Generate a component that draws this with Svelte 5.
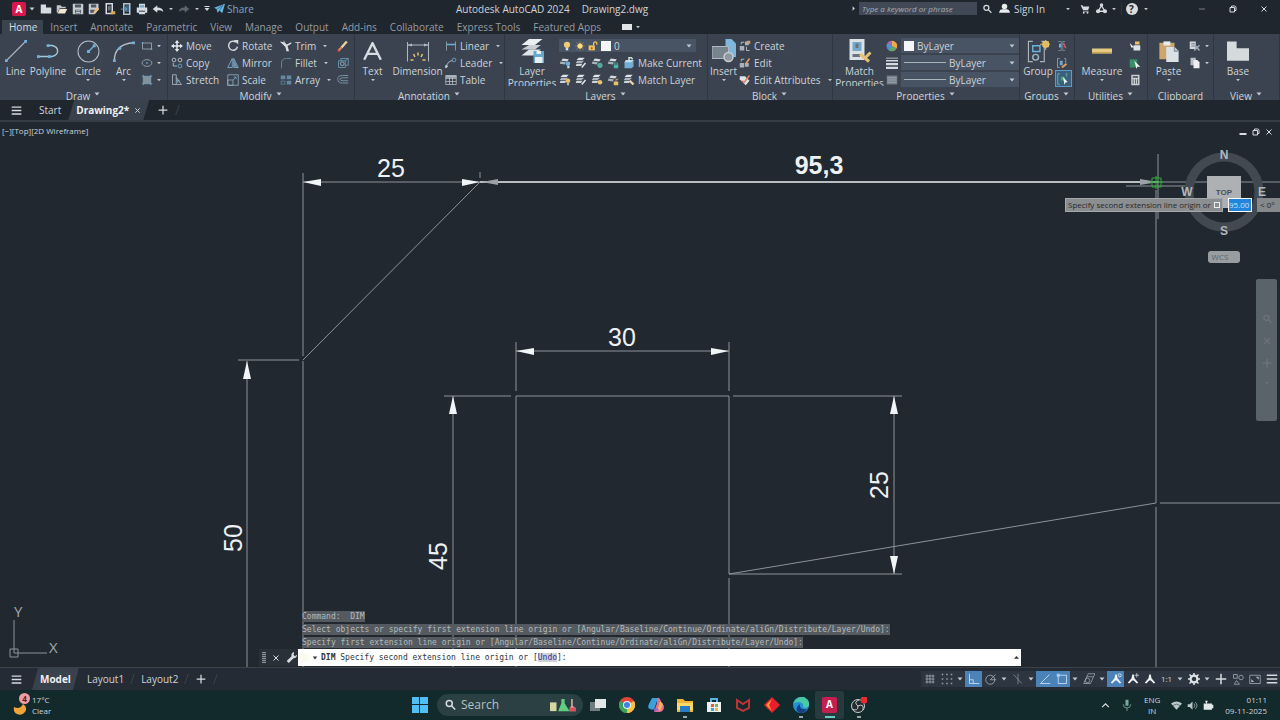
<script>
  const C = "#d5dbe0";
  const B = "#6fb1dc";
  const Y = "#e8c36a";

  const line = (d, color = C, w = 1) =>
    `<path d="${d}" fill="none" stroke="${color}" stroke-width="${w}"/>`;
  const fill = (d, color = C) => `<path d="${d}" fill="${color}"/>`;
  const sheets =
    fill("M5 2l8 1-2 3-8-1z") + fill("M2 6l7 1-1 3-7-1z", "#a9b2ba");
  const stack =
    fill("M5 1h8l-3 3H2z", "#dfe3e7") + fill("M3 5h9l-3 3H1z", "#aeb6bd") + fill("M2 9h8l-2 3H1z", "#cfd5d9");
  const person = fill("M7 2h2l1 5 5 6-2 1-4-4h-2l-4 4-2-1 5-6z", "#eef2f5");

  // every icon is drawn on a 16 x 16 grid
  const icons = {
    caret: fill("M3 5h10l-5 6z", "#c3c9cf"),
    right: fill("M6 3l5 5-5 5z"),
    burger: fill("M1 2h14v2H1zM1 7h14v2H1zM1 12h14v2H1z"),
    plus: line("M8 1v14M1 8h14", C, 2),
    close: line("M3 3l10 10M13 3L3 13", C, 2),
    minimize: line("M2 8h12", C, 1),
    bar: line("M1 12h14", C, 4),
    restore: line("M2 5h9v9H2zM5 5V2h6q3 0 3 3v6h-3", C, 2),
    new: fill("M1 2h7v4h7v8H1z"),
    open: fill("M1 3h5l2 2h5v2H5l-3 6H1z", "#bfc4c8") + fill("M5 8h10l-3 6H2z", "#f2e7cf"),
    save: fill("M1 1h13l1 1v13H1z", "#c6cbd0") + fill("M4 2h8v4H4zM4 9h8v5H4z", "#4d5964") + fill("M5 10h6v1H5zM5 12h6v1H5z", "#e3e6e8"),
    saveas: fill("M1 1h13v8l-5 6H1z", "#c6cbd0") + fill("M4 2h7v4H4zM3 9h6v4H3z", "#4d5964") + line("M8 13l6-6", "#eebc72", 3),
    web: line("M3 1h8v13H3z", C, 2) + fill("M5 4h4v6H5z", "#65717c") + fill("M9 11h6v4H9z", "#d5ad55"),
    mobile: line("M5 1h8v14H5z", "#b9c2ca", 2) + fill("M7 3h5v9H7z", "#3d6a8b") + line("M1 8h8M6 5l3 3-3 3", B, 1),
    print: fill("M4 1h8v5h3v7h-3v2H4v-2H1V6h3z", "#d7dce1") + fill("M4 10h8v2H4z", "#66717b") + fill("M5 3h6v3H5z", "#6fa7cb"),
    undo: fill("M1 8l6-5v3q8 0 8 6-2-3-8-2v3z"),
    redo: fill("M15 8L9 3v3q-8 0-8 6 2-3 8-2v3z", "#5c6670"),
    more: fill("M3 2h10v2H3zM3 6h10l-5 6z"),
    plane: fill("M0 7L16 1l-4 14-4-4-3 3-1-5z", "#64b5e8") + line("M4 9l9-6-5 8", "#286080", 1),
    search: `<circle cx="7" cy="6" r="4" fill="none" stroke="${C}" stroke-width="2"/>` + line("M10 9l5 5", C, 2),
    user: `<circle cx="8" cy="5" r="4" fill="#e9edf0"/>` + fill("M0 14q1-5 5-5h6q4 0 5 5z", "#e9edf0"),
    cart: fill("M1 2h3l1 2h10l-2 6H5zM5 11h9v1H5z") + `<circle cx="6" cy="14" r="1.5" fill="${C}"/><circle cx="12" cy="14" r="1.5" fill="${C}"/>`,
    nodes: line("M8 4l-5 8h10z", C, 2) + `<circle cx="8" cy="3" r="2.5" fill="${C}"/><circle cx="3" cy="12" r="3" fill="${C}"/><circle cx="13" cy="12" r="3" fill="${C}"/>`,
    line: line("M1 15L15 1", "#aeb7bf") + fill("M0 14h2v2H0zM14 0h2v2h-2z", B),
    polyline: line("M0 12h11q4-1 4-4t-4-4H8", "#a8c5d8") + fill("M0 11h2v2H0zM8 11h2v2H8zM7 3h2v2H7z", B),
    circle: `<circle cx="8" cy="8" r="7.3" fill="none" stroke="#b4bdc5" stroke-width=".7"/>` + line("M8 8l4-4", B) + fill("M7 7h2v2H7zM11 3h2v2h-2z", B),
    arc: line("M1 15Q1 3 15 2", "#b4bdc5") + fill("M0 14h2v2H0zM4 5h2v2H4zM14 1h2v2h-2z", B),
    rect: line("M2 4h12v8H2z", "#aab4bd") + fill("M1 3h2v2H1zM13 11h2v2h-2z", B),
    ellipse: `<ellipse cx="8" cy="8" rx="6.5" ry="4.5" fill="none" stroke="#aab4bd"/><path d="M7 7h2v2H7z" fill="${B}"/>`,
    hatch: fill("M3 3h10v10H3z", "#83919d") + line("M1 3h14M1 13h14M3 1v14M13 1v14", "#7ba6c2"),
    move: line("M8 2v12M2 8h12", "#e6eaed", 2) + fill("M8 0l3 4H5zM8 16l3-4H5zM0 8l4-3v6zM16 8l-4-3v6z", "#e6eaed"),
    copy: `<circle cx="4" cy="4" r="2.5" fill="none" stroke="${C}"/><circle cx="12" cy="4" r="2.5" fill="none" stroke="${C}"/><circle cx="12" cy="12" r="2.5" fill="none" stroke="${B}"/>` + line("M3 8v4h5", C),
    stretch: line("M2 1h5v13H2zM7 5l7 9H7", "#bac3ca") + line("M9 6v6M7 9h5", B),
    rotate: line("M12 3A6 6 0 1 0 14 9", "#ced4d9", 2) + fill("M9 0h6v6z"),
    mirror: line("M7 2v12H1zM9 2v12h6z", "#8fbfdf", 1) + fill("M9 4v9h5z", "#6c94b0"),
    scale: line("M1 1h14v14H1zM1 8h7v7H1z", "#9cb5c6") + line("M8 8l4-4M9 4h3v3", B),
    trim: fill("M0 2l5 1 4 3 6-3v2l-5 3 2 7h-3L7 9z", "#dfe3e6") + line("M1 3l7 4M5 1l3 6M9 7v8", C),
    fillet: line("M2 15V8q0-6 7-6h6", "#7995a8", 1),
    array: fill("M1 2h6v5H1zM9 2h6v5H9zM1 9h6v5H1zM9 9h6v5H9z", "#6787a0") + fill("M2 10h4v3H2z", "#314657"),
    erase: line("M2 14l4-4", "#e8865e", 3) + line("M6 10l7-8", "#f0d3a2", 3) + fill("M1 12l3 3-3 1z", "#e54e43"),
    explode: line("M2 5h9v9H2zM5 5V2h10v9h-4M11 5l4-3", "#70a5c7", 1) + `<circle cx="7" cy="9" r="2.5" fill="none" stroke="#bac9d4"/>`,
    offset: line("M15 2H7Q1 2 1 7t6 5h8M15 5H8Q4 5 4 7t4 2h7", "#8ba8ba", 1),
    text: line("M1 15L8 1l7 14M4 10h8", "#d5dce2", 2),
    dimension: line("M1 2v13M15 2v13M1 4h14", "#aeb7bf", 0.7) + fill("M1 4l3-1v2zM15 4l-3-1v2z", "#aeb7bf") + line("M8 9v2M5 10l1 2M11 10l-1 2M3 14h2M13 14h-2", Y),
    linear: line("M2 2v12M14 2v12", "#a3adb6") + line("M2 6h12", B, 2),
    leader: line("M2 14q1-9 8-9", C) + `<circle cx="12" cy="4" r="2.5" fill="none" stroke="${B}"/><path d="M0 15l1-5 3 3z" fill="${C}"/>`,
    table: line("M1 2h14v12H1zM1 6h14M1 10h14M6 2v12M10 2v12", "#bac2ca") + fill("M1 2h14v3H1z", "#aeb7bf"),
    layers: fill("M6 0h9l-5 4H1z", "#eceff1") + fill("M6 4h8l-4 3H1z", "#c7cdd2") + fill("M6 7h8l-5 4H1z", "#e0e4e7") + fill("M9 8h7v8H9z", "#62a9d2") + fill("M11 8h3v2h-3zM10 12h5v4h-5z", "#e9eff2"),
    bulb: `<circle cx="8" cy="6" r="5" fill="#f2ca76"/>` + fill("M6 11h4v4H6z", "#d9dde0"),
    sun: `<circle cx="8" cy="8" r="4" fill="#f4d36b"/>` + line("M8 0v16M0 8h16M2 2l12 12M14 2L2 14", "#aa9040", 1) + `<circle cx="8" cy="8" r="4" fill="#f7dc83"/>`,
    unlock: fill("M1 7h10v8H1z", "#efbf5d") + line("M9 7V3q3-3 5 0v3", "#efbf5d", 2) + fill("M5 10h2v3H5z", "#785920"),
    layoff: sheets + `<circle cx="12" cy="9" r="3" fill="${B}"/>` + fill("M11 12h3v3h-3z", C),
    layiso: stack + line("M9 14l5-6", "#e2e6e9", 2),
    layfreeze: sheets + `<circle cx="12" cy="11" r="3.5" fill="#4faaa0"/>`,
    laylock: sheets + fill("M9 10h6v5H9z", "#4bb4a8") + line("M10 10V8h4v2", "#4bb4a8", 1),
    laycur: fill("M4 4h10v9l-3 2H2V7z", "#74aed3") + fill("M4 4h10l-3 3H2z", "#c3deef") + line("M8 5V1h3l2 2", C, 2),
    layon: stack + `<circle cx="12" cy="9" r="3" fill="${Y}"/>` + fill("M11 12h2v3h-2z", C),
    laythaw: stack + `<circle cx="12" cy="11" r="3" fill="${Y}"/>`,
    layunlock: sheets + fill("M9 10h6v5H9z", Y) + line("M12 10V7h3", Y, 1),
    laymatch: stack + line("M9 9l5 5", "#eed9a9", 3),
    insert: fill("M9 0h4l3 3v9H9z", "#7db7dc") + fill("M0 5h11v8H0z", "#77838d") + line("M0 5h11v8H0z", "#aeb8c0", 0.7) + `<circle cx="11" cy="12" r="3" fill="#8d98a0" stroke="#c8ced2"/>`,
    create: fill("M1 8h6v6H1zM8 2h5v5H8z", "#a9b2ba") + line("M3 6V3h4M10 9v5h4", C) + fill("M11 1h4v4h-4z", "#e49b60"),
    edit: fill("M1 8h6v6H1zM8 8h5v5H8z", "#a9b2ba") + line("M3 6V3h4", C) + line("M9 9l5-7", "#eba06d", 2),
    attr: fill("M1 3h7l6 6-5 6-8-8z", "#dde2e6") + line("M4 9l3 2 7-9", "#df805c", 2),
    match: fill("M1 0h10v14H1z", "#dce1e4") + fill("M3 2h6v6H3z", "#70a9cf") + fill("M5 3h2v3H5zM3 10h5v2H3z", "#68737c") + line("M8 10l6 5M11 13l4-4", "#e5c272", 2),
    wheel: `<circle cx="8" cy="8" r="7" fill="#e65a52"/>` + fill("M8 8V1a7 7 0 0 1 6 10z", "#edac47") + fill("M8 8l6 3a7 7 0 0 1-10 3z", "#54ae6a") + fill("M8 8l-4 6a7 7 0 0 1-2-10z", "#4e8fd9") + fill("M8 8L2 4a7 7 0 0 1 6-3z", "#9c6bc5"),
    weight: fill("M0 1h16v1H0zM0 4h16v2H0zM0 8h16v3H0zM0 13h16v3H0z"),
    linetype: fill("M1 2h14v12H1z", "#737e88") + line("M2 5h12M2 8h12M2 11h12", "#aeb6bd"),
    group: line("M4 1H1v14h3M10 1h2v14h-3", "#a9b3bb", 0.8) + line("M4 4h5v4H4z", B) + `<circle cx="6" cy="12" r="2" fill="none" stroke="#9bb4c4"/><circle cx="13" cy="3" r="2.5" fill="#f0cc70"/>` + line("M13 0v7M9 3h7M11 1l4 4M15 1l-4 4", "#dcb95f", .7),
    ungroup: line("M3 2h4v12H3M12 2H9v12h3", "#8498a7") + fill("M4 5h3v5H4z", B) + line("M10 4l3 7", "#d65e62", 2),
    groupedit: line("M5 2H2v12h3M11 2h2v6", "#9db2c0") + fill("M5 5h4v6H5z", "#72a6c8") + line("M8 14l6-5", "#dc9862", 3),
    groupsel: line("M4 1H1v14h3M11 1h2v4", "#7fbd95") + fill("M5 5h5v5H5z", "#4ea27b") + fill("M8 5l6 7-3 1-1 3z", "#eff4f5"),
    measure: fill("M0 6h16v4H0z", "#e6ca83") + fill("M0 9h16v1H0z", "#b5984c"),
    selectall: fill("M6 7h9v7H6z", "#dde2e6") + fill("M8 2h6v4H8z", Y) + fill("M1 4l6 6H3z", "#eef1f3"),
    quick: fill("M1 3h10v11H1z", "#398e65") + fill("M7 5l8 8h-4l-1 3z", "#edf2f2"),
    calc: fill("M3 1h11v14H3z", "#c8cdd1") + fill("M5 3h7v2H5zM5 7h1v6H5zM8 7h1v6H8zM11 7h1v6h-1z", "#3d4852"),
    paste: fill("M1 2h11v12H1z", "#cda56f") + fill("M4 1h5v3H4z", "#e9ecee") + fill("M6 5h6l3 3v8H6z", "#dce1e5") + line("M12 5v3h3", "#89949c"),
    clip: fill("M1 2h8v10H1z", "#d4d9dd") + line("M3 5h5M3 8h5", "#53606a") + line("M8 7l6 7M14 7l-7 7", "#9eabb5", 2),
    clip2: fill("M2 1h7v10H2z", "#b7bfc6") + fill("M6 4h5l3 3v8H6z", "#edf0f2"),
    base: fill("M0 1h7v5h9v9H0z", "#d5dadd"),
    wrench: fill("M1 13l7-7q-1-5 4-6l-1 4 2 2 3-2q0 5-5 5l-7 7z"),
    grid: line("M2 4h12M2 8h12M2 12h12M4 2v12M8 2v12M12 2v12", "#aab2ba"),
    snap: fill("M1 1h2v2H1zM7 1h2v2H7zM13 1h2v2h-2zM1 7h2v2H1zM7 7h2v2H7zM13 7h2v2h-2zM1 13h2v2H1zM7 13h2v2H7zM13 13h2v2h-2z", "#96a0a9"),
    ortho: line("M2 1v13h13M2 9h5v5", "#dceafa", 1),
    polar: `<circle cx="7" cy="9" r="6" fill="none" stroke="#adb5bd"/>` + line("M7 9h8M7 9l7-7", "#adb5bd"),
    iso: line("M2 2l11 12M8 1v14", "#8b959e"),
    track: line("M2 14h13M2 14L14 2", "#dceafa"),
    osnap: line("M3 3h11v11H3z", "#dceafa") + fill("M1 1h4v4H1z", "#a9cdf0"),
    cube: line("M5 5h9L10 14H1zM5 5l2-4h9l-2 4", "#a3acb4") + `<circle cx="6" cy="10" r="3" fill="none" stroke="#a3acb4"/>`,
    anno1: person + `<circle cx="13" cy="3" r="2" fill="none" stroke="#eef2f5"/>`,
    anno2: person + line("M10 3h6M13 0v6", "#d2d8dd"),
    anno3: person,
    gear: `<circle cx="8" cy="8" r="4.5" fill="none" stroke="#dfe3e7" stroke-width="3"/>` + line("M8 0v3M8 13v3M0 8h3M13 8h3M2 2l3 3M11 11l3 3M14 2l-3 3M5 11l-3 3", "#dfe3e7", 2),
    objects: line("M2 2h5v5H2zM6 10l4 5H3z", "#aab2ba") + `<circle cx="12" cy="6" r="3" fill="none" stroke="#aab2ba"/>`,
    full: line("M1 3h14v11H1z", "#aab2ba") + fill("M9 5h4v4zM3 12V8l4 4z", "#aab2ba"),
    win: fill("M0 0h7v7H0zM8 0h8v7H8zM0 8h7v8H0zM8 8h8v8H8z", "#50bdf3"),
    taskview: fill("M0 5h10v9H0z", "#737c80") + fill("M5 2h11v9H5z", "#e3e7e8"),
    chrome: `<circle cx="8" cy="8" r="8" fill="#e34539"/>` + fill("M8 8l7-4a8 8 0 0 1-8 12z", "#f5c33d") + fill("M8 8l0 8A8 8 0 0 1 1 4z", "#35a45a") + `<circle cx="8" cy="8" r="4" fill="#eef3f7"/><circle cx="8" cy="8" r="3" fill="#3e83df"/>`,
    copilot: fill("M4 1h6l-3 9q-1 4-5 2-3-1-1-5z", "#3ca0dd") + fill("M9 1q3-1 4 4l3 4q0 6-5 6H6l3-9z", "#e66c92") + fill("M12 4l3 3-3 7-2-3z", "#f1ba58") + fill("M5 11l5 1-3 3z", "#8b63d4"),
    folder: fill("M0 2h6l2 2h8v11H0z", "#eeb536") + fill("M0 6h16v7H0z", "#ffd768") + fill("M3 9h10v6H3z", "#277dc2"),
    store: fill("M1 5h14v10H1z", "#ecf1f2") + line("M5 5V2h6v3", "#57b6df", 2) + fill("M5 7h3v3H5z", "#df5a42") + fill("M9 7h3v3H9z", "#78b64d") + fill("M5 11h3v3H5z", "#43a0d9") + fill("M9 11h3v3H9z", "#e9b93a"),
    shield: line("M2 3l6 4 6-4v8l-6 3-6-3z", "#bd3436", 2),
    diamond: fill("M8 0l8 8-8 8-8-8z", "#e91f2b") + fill("M8 2l-3 6 3 6-6-6z", "#ff9a3f"),
    edge: `<circle cx="8" cy="8" r="8" fill="#2591d4"/>` + fill("M0 7Q3-1 11 0q6 3 5 9-3 3-6 1 1-5-5-5-3 0-5 2z", "#48c9a6") + fill("M7 7q-1 6 7 5-4 6-9 3-4-4 2-8z", "#173f83"),
    obs: `<circle cx="7" cy="9" r="6.5" fill="#242b2e" stroke="#c8cdd0"/>` + line("M7 9Q2 5 8 3M7 9q6-3 5 4M7 9q0 6-6 3", "#c8cdd0", 1) + `<circle cx="13" cy="3" r="3.5" fill="#e62b31"/>`,
    chevron: line("M2 11l6-6 6 6", "#dce4e5", 2),
    mic: fill("M6 1h4v8H6z", "#78a99d") + line("M3 7q0 5 5 5t5-5M8 12v4", "#8cafaa", 1),
    wifi: fill("M0 5Q8-1 16 5L8 14z", "#b9c7c8") + line("M3 8q5-4 10 0", "#395052"),
    sound: fill("M1 6h3l4-4v12l-4-4H1z", "#b9c7c8") + line("M10 5q3 3 0 6M12 3q5 5 0 10", "#b9c7c8"),
    battery: fill("M1 5h12v2h2v5h-2v2H1z", "#e1e8e8") + fill("M3 1h4l-2 5z", "#e1e8e8"),
    lab: fill("M0 5h4v10H0z", "#d8d4a1") + fill("M7 1h2v5l3 9H5l2-9z", "#61cd81") + fill("M13 1h1v8l2 3v3h-4v-3l1-3z", "#d9a7a8") + fill("M12 11h4v4h-4z", "#dc4f58"),
    moon: fill("M1 8q6 3 9-3 5 3 2 8-3 4-8 2-4-2-3-7z", "#f1a43a"),
  };

  const quick = ["new", "open", "save", "saveas", "web", "mobile", "print", "undo"];
  const menus = ["Home", "Insert", "Annotate", "Parametric", "View", "Manage", "Output", "Add-ins", "Collaborate", "Express Tools", "Featured Apps"];
  const modify = [
    ["move", "Move"], ["rotate", "Rotate"], ["trim", "Trim", 1], ["erase", ""],
    ["copy", "Copy"], ["mirror", "Mirror"], ["fillet", "Fillet", 1], ["explode", ""],
    ["stretch", "Stretch"], ["scale", "Scale"], ["array", "Array", 1], ["offset", ""],
  ];
  const layerTools = [
    ["layoff", ""], ["layiso", ""], ["layfreeze", ""], ["laylock", ""], ["laycur", "Make Current"],
    ["layon", ""], ["layiso", ""], ["laythaw", ""], ["layunlock", ""], ["laymatch", "Match Layer"],
  ];
  const history = [
    "Command:  DIM",
    "Select objects or specify first extension line origin or [Angular/Baseline/Continue/Ordinate/aliGn/Distribute/Layer/Undo]:",
    "Specify first extension line origin or [Angular/Baseline/Continue/Ordinate/aliGn/Distribute/Layer/Undo]:",
  ];
  const status = [
    "grid", "snap", "caret", "ortho", "polar", "caret", "iso", "caret", "track", "osnap", "caret", "cube", "caret",
    "anno1", "anno2", "anno3", "1:1", "caret", "gear", "caret", "plus", "objects", "full", "burger",
  ];
  const active = ["ortho", "track", "osnap", "anno1"];
  const apps = ["taskview", "chrome", "copilot", "folder", "store", "shield", "diamond", "edge", "autocad", "obs"];
  const running = ["folder", "edge", "autocad", "obs"];

  let command = $state("");
  let distance = $state("95.00");
</script>

{#snippet icon(name, size = 12)}
  <svg width={size} height={size} viewBox="0 0 16 16" aria-hidden="true">{@html icons[name]}</svg>
{/snippet}

{#snippet big(name, label, size = 24, caret = true)}
  <button class="big">
    <span class="big-icon">{@render icon(name, size)}</span>
    <span>{label}</span>
    {#if caret}{@render icon("caret", 6)}{/if}
  </button>
{/snippet}

{#snippet small(name, label, caret = false)}
  <button class="small" aria-label={label || name}>
    {@render icon(name, 12)}
    {#if label}<span>{label}</span>{/if}
    {#if caret}<i>{@render icon("caret", 6)}</i>{/if}
  </button>
{/snippet}

{#snippet title(label, caret = true)}
  <div class="panel-title">{label}{#if caret}{@render icon("caret", 8)}{/if}</div>
{/snippet}

<div class="app">
  <header class="titlebar">
    <div class="quick">
      <button class="logo" aria-label="Application menu">A</button>
      <button class="drop" aria-label="Open menu">{@render icon("caret", 8)}</button>
      {#each quick as name}
        <button aria-label={name}>{@render icon(name)}</button>
      {/each}
      <button class="drop" aria-label="Undo list">{@render icon("caret", 6)}</button>
      <button aria-label="redo">{@render icon("redo")}</button>
      <button class="drop" aria-label="Redo list">{@render icon("caret", 6)}</button>
      <button class="drop" aria-label="Customize">{@render icon("more", 8)}</button>
      <button class="share">{@render icon("plane", 11)}Share</button>
    </div>
    <div class="doc-title"><span>Autodesk AutoCAD 2024</span><span>Drawing2.dwg</span></div>
    <div class="account">
      {@render icon("right", 7)}
      <input type="search" aria-label="Search help" placeholder="Type a keyword or phrase" />
      <button aria-label="Search">{@render icon("search", 10)}</button>
      <button class="signin">{@render icon("user", 11)}Sign In</button>
      <button class="drop" aria-label="Account">{@render icon("caret", 6)}</button>
      <button aria-label="Store">{@render icon("cart", 10)}</button>
      <button aria-label="Apps">{@render icon("nodes", 11)}</button>
      <button class="drop" aria-label="App list">{@render icon("caret", 6)}</button>
      <button class="help" aria-label="Help"><b>?</b></button>
      <button class="drop" aria-label="Help list">{@render icon("caret", 6)}</button>
      <div class="window">
        <button aria-label="Minimize">{@render icon("minimize", 8)}</button>
        <button aria-label="Restore">{@render icon("restore", 8)}</button>
        <button aria-label="Close">{@render icon("close", 8)}</button>
      </div>
    </div>
  </header>

  <nav class="menus">
    {#each menus as menu, i}
      <button class:current={i === 0}>{menu}</button>
    {/each}
    <button class="ribbon-mode" aria-label="Ribbon display"><b></b>{@render icon("caret", 6)}</button>
  </nav>

  <div class="ribbon">
    <section class="panel">
      <div class="body draw">
        {@render big("line", "Line", 22, false)}
        {@render big("polyline", "Polyline", 22, false)}
        {@render big("circle", "Circle", 23)}
        {@render big("arc", "Arc", 22)}
        <div class="stack">
          {@render small("rect", "", true)}
          {@render small("ellipse", "", true)}
          {@render small("hatch", "", true)}
        </div>
      </div>
      {@render title("Draw")}
    </section>

    <section class="panel">
      <div class="body modify">
        {#each modify as [name, label, caret]}
          {@render small(name, label, caret)}
        {/each}
      </div>
      {@render title("Modify")}
    </section>

    <section class="panel">
      <div class="body annotation">
        {@render big("text", "Text", 19)}
        {@render big("dimension", "Dimension", 24, false)}
        <div class="stack">
          {@render small("linear", "Linear", true)}
          {@render small("leader", "Leader", true)}
          {@render small("table", "Table")}
        </div>
      </div>
      {@render title("Annotation")}
    </section>

    <section class="panel">
      <div class="body layers">
        {@render big("layers", "Layer Properties", 24, false)}
        <div class="stack">
          <label class="combo layer-combo">
            {@render icon("bulb", 10)}{@render icon("sun", 10)}{@render icon("unlock", 10)}
            <b class="swatch"></b>
            <select aria-label="Layer"><option>0</option></select>
            {@render icon("caret", 8)}
          </label>
          <div class="layer-grid">
            {#each layerTools as [name, label]}
              {@render small(name, label)}
            {/each}
          </div>
        </div>
      </div>
      {@render title("Layers")}
    </section>

    <section class="panel">
      <div class="body block">
        {@render big("insert", "Insert", 24)}
        <div class="stack">
          {@render small("create", "Create")}
          {@render small("edit", "Edit")}
          {@render small("attr", "Edit Attributes", true)}
        </div>
      </div>
      {@render title("Block")}
    </section>

    <section class="panel">
      <div class="body properties">
        {@render big("match", "Match Properties", 24, false)}
        <div class="stack">
          {#each ["wheel", "weight", "linetype"] as name, i}
            <div class="prop">
              {@render icon(name)}
              <label class="combo">
                {#if i === 0}<b class="swatch"></b>{:else}<b class="rule"></b>{/if}
                <select aria-label={name}><option>ByLayer</option></select>
                {@render icon("caret", 8)}
              </label>
            </div>
          {/each}
        </div>
      </div>
      {@render title("Properties")}
    </section>

    <section class="panel">
      <div class="body pair">
        {@render big("group", "Group", 23, false)}
        <div class="stack">
          {@render small("ungroup", "")}
          {@render small("groupedit", "")}
          <div class="selected">{@render small("groupsel", "")}</div>
        </div>
      </div>
      {@render title("Groups")}
    </section>

    <section class="panel">
      <div class="body pair">
        {@render big("measure", "Measure", 20)}
        <div class="stack">
          {@render small("selectall", "")}
          {@render small("quick", "")}
          {@render small("calc", "")}
        </div>
      </div>
      {@render title("Utilities")}
    </section>

    <section class="panel">
      <div class="body pair">
        {@render big("paste", "Paste", 22)}
        <div class="stack">
          {@render small("clip", "", true)}
          {@render small("clip2", "", true)}
        </div>
      </div>
      {@render title("Clipboard", false)}
    </section>

    <section class="panel">
      <div class="body view">{@render big("base", "Base", 22)}</div>
      {@render title("View")}
    </section>
  </div>

  <nav class="files">
    <button class="burger" aria-label="Drawings">{@render icon("burger", 11)}</button>
    <button class="file">Start</button>
    <button class="file open">Drawing2* <i>{@render icon("close", 7)}</i></button>
    <button class="add" aria-label="New drawing">{@render icon("plus", 10)}</button>
    <i class="slash"></i>
  </nav>

  <main class="canvas">
    <svg class="drawing" viewBox="0 122 1280 545" preserveAspectRatio="xMinYMin slice">
      <g class="thin">
        <path d="M303 173V356M303 361V667M303 182H480M480 182L303 360" />
        <path d="M238 360H299M247 361V667" />
        <path d="M516 342V391M729 342V391M516 351H729M516 667V396H729V574M729 578V667" />
        <path d="M444 396H511M453 396V667M733 396H902M894 396V574M729 574H902" />
        <path d="M729 574L1156 503V190M1156 507V667M1160 503H1280M1158 182H1280" />
        <path d="M1158 154V219M1126 186H1185M480 172V178" />
      </g>
      <path class="preview" d="M480 182H1158" />
      <g fill="#f2f5f7">
        <path d="M303 182l18-3v7zM480 182l-18-3v7zM516 351l18-3v7zM729 351l-18-3v7z" />
        <path d="M247 361l-4 18h8zM453 396l-4 18h8zM894 396l-4 18h8zM894 574l-4-18h8z" />
        <path d="M482 182l16-3v6zM1158 182l-18-3v6z" fill="#9ba1a6" />
      </g>
      <path d="M1152 178h9v9h-9zM1150 182h13M1156 176v13" fill="none" stroke="#2cad36" />
      <g class="values">
        <text x="391" y="177">25</text>
        <text x="819" y="174" class="bold">95,3</text>
        <text x="622" y="346">30</text>
        <text transform="translate(242 538) rotate(-90)">50</text>
        <text transform="translate(447 556) rotate(-90)">45</text>
        <text transform="translate(888 485) rotate(-90)">25</text>
      </g>
      <g class="ucs">
        <path d="M10 649h8v8h-8zM14 653V620M14 653H47" />
        <text x="14" y="617">Y</text>
        <text x="49" y="653">X</text>
      </g>
    </svg>

    <span class="viewport">[−][Top][2D Wireframe]</span>
    <div class="window viewport-window">
      <button aria-label="Minimize view">{@render icon("bar", 8)}</button>
      <button aria-label="Restore view">{@render icon("restore", 8)}</button>
      <button aria-label="Close view">{@render icon("close", 8)}</button>
    </div>

    <div class="cube">
      <svg width="92" height="92" viewBox="0 0 92 92">
        <circle cx="46" cy="46" r="35" fill="none" stroke="#424951" stroke-width="9" />
        <path d="M29 30h34v32H29z" fill="#aeb1b3" />
        <g class="compass">
          <text x="46" y="13">N</text>
          <text x="9" y="50">W</text>
          <text x="84" y="50">E</text>
          <text x="46" y="89">S</text>
        </g>
        <text class="face" x="46" y="49">TOP</text>
      </svg>
      <button class="wcs">WCS</button>
    </div>

    <div class="navbar">
      {@render icon("search", 10)}
      {@render icon("close", 10)}
      {@render icon("plus", 10)}
      {@render icon("caret", 6)}
    </div>

    <div class="dynamic">
      <label for="distance">Specify second extension line origin or <b></b></label>
      <input id="distance" type="text" bind:value={distance} />
      <span>&lt; 0°</span>
    </div>

    <div class="console">
      <div class="history">
        {#each history as entry}
          <span>{entry}</span>
        {/each}
      </div>
      <div class="prompt">
        <div class="tools">
          <i class="grip"></i>
          <button aria-label="Close command line">{@render icon("close", 8)}</button>
          <button aria-label="Customize command line">{@render icon("wrench", 11)}</button>
        </div>
        <div class="entry">
          <i class="mark"></i>
          <svg width="6" height="6" viewBox="0 0 16 16"><path d="M2 4h12l-6 8z" fill="#333" /></svg>
          <label for="command"><b>DIM</b> Specify second extension line origin or [<mark>Undo</mark>]:</label>
          <input id="command" type="text" bind:value={command} />
          <svg width="5" height="5" viewBox="0 0 16 16"><path d="M0 12h16L8 3z" fill="#333" /></svg>
        </div>
      </div>
    </div>
  </main>

  <footer class="layouts">
    <button class="burger" aria-label="Layouts">{@render icon("burger", 11)}</button>
    <button class="layout open">Model</button>
    <button class="layout">Layout1</button>
    <i class="slash"></i>
    <button class="layout">Layout2</button>
    <i class="slash"></i>
    <button class="add" aria-label="New layout">{@render icon("plus", 10)}</button>
    <i class="slash"></i>
    <div class="status">
      {#each status as name}
        <button class:drop={name === "caret"} class:on={active.includes(name)} aria-label={name}>
          {#if name === "1:1"}<small>1:1</small>{:else}{@render icon(name, name === "caret" ? 8 : 12)}{/if}
        </button>
      {/each}
    </div>
  </footer>

  <div class="taskbar">
    <button class="weather">
      <span class="moon">{@render icon("moon", 16)}<b>4</b></span>
      <span>17°C<br />Clear</span>
    </button>
    <div class="apps">
      <button class="start" aria-label="Start menu">{@render icon("win", 16)}</button>
      <label class="find">
        {@render icon("search", 12)}
        <input type="text" aria-label="Search" placeholder="Search" />
        <svg width="26" height="14" viewBox="0 0 16 16" preserveAspectRatio="none">{@html icons.lab}</svg>
      </label>
      {#each apps as app}
        <button class="task" class:running={running.includes(app)} class:focused={app === "autocad"} aria-label={app}>
          {#if app === "autocad"}<b class="cad">A</b>{:else}{@render icon(app, 16)}{/if}
        </button>
      {/each}
    </div>
    <div class="tray">
      <button aria-label="Hidden icons">{@render icon("chevron", 9)}</button>
      <button aria-label="Microphone">{@render icon("mic", 12)}</button>
      <button class="lang">ENG<br />IN</button>
      <div class="net">{@render icon("wifi", 11)}{@render icon("sound", 11)}{@render icon("battery", 11)}</div>
      <button class="clock">01:11<br />09-11-2025</button>
    </div>
  </div>
</div>

<style>
  :global(body) {
    margin: 0;
    background: #212830;
  }

  .app {
    display: flex;
    flex-direction: column;
    min-height: 100vh;
    overflow: hidden;
    color: #cdd3d9;
    font: 10px/14px "Open Sans", "Noto Sans", sans-serif;
  }

  button,
  input,
  select {
    margin: 0;
    padding: 0;
    border: 0;
    outline: 0;
    background: none;
    color: inherit;
    font: inherit;
  }

  button {
    display: flex;
    align-items: center;
    justify-content: center;
    white-space: nowrap;
  }

  svg {
    display: block;
    flex: none;
  }

  select {
    flex: 1;
    min-width: 0;
    appearance: none;
  }

  .titlebar {
    display: grid;
    grid-template-columns: 456fr 394fr 430fr;
    align-items: center;
    height: 17px;
    background: #20262e;
  }

  .quick,
  .account,
  .doc-title,
  .window {
    display: flex;
    align-items: center;
  }

  .quick {
    padding-left: 12px;
  }

  .quick button {
    width: 16px;
  }

  .quick .logo {
    width: 14px;
    height: 14px;
    border-radius: 2px;
    background: #d8184c;
    color: #fff;
    font-weight: 700;
  }

  .quick .drop {
    width: 10px;
  }

  .quick .logo + .drop {
    width: 12px;
  }

  .quick .share {
    gap: 2px;
    width: 44px;
    color: #7fa6c0;
  }

  .doc-title {
    gap: 12px;
  }

  .account > input {
    flex: 0 0 118px;
    height: 13px;
    margin: 0 2px;
    padding-left: 3px;
    background: #414957;
    font-size: 8px;
    font-style: italic;
    appearance: none;
  }

  .account > input::placeholder {
    color: #a5acb5;
  }

  .account button {
    width: 16px;
  }

  .account .signin {
    gap: 4px;
    width: 54px;
  }

  .account .drop {
    width: 10px;
  }

  .account .signin + .drop {
    margin: 0 4px 0 14px;
  }

  .account .help {
    width: 20px;
    margin-left: 2px;
    border-left: 1px solid #2d343c;
  }

  .help b {
    width: 12px;
    border-radius: 6px;
    background: #d9dde0;
    color: #20262e;
    line-height: 12px;
  }

  .account .window {
    flex: 1;
    justify-content: flex-end;
    gap: 15px;
    padding-right: 8px;
  }

  .menus {
    display: flex;
    align-items: flex-end;
    height: 17px;
    padding-left: 2px;
    background: #20262e;
  }

  .menus button {
    height: 14px;
    padding: 0 6px 0 7px;
    color: #959ca4;
  }

  .menus .current {
    background: #3a444f;
    color: #d5dbe0;
  }

  .ribbon-mode b {
    width: 10px;
    height: 6px;
    margin: 0 3px 0 8px;
    background: #e1e5e8;
  }

  .ribbon {
    display: grid;
    grid-template-columns: 168fr 187fr 150fr 203fr 125fr 187fr 55fr 73fr 66fr 66fr;
    background: #3a434f;
  }

  .panel {
    min-width: 0;
    padding-top: 3px;
    border-right: 1px solid #303843;
    overflow: hidden;
  }

  .body {
    display: grid;
    height: 51px;
  }

  .panel-title {
    display: flex;
    align-items: flex-start;
    justify-content: center;
    gap: 3px;
    height: 12px;
    overflow: hidden;
    line-height: 16px;
  }

  .panel-title svg {
    margin-top: 2px;
  }

  .stack {
    display: flex;
    flex-direction: column;
    min-width: 0;
  }

  .big {
    flex-direction: column;
    justify-content: flex-start;
    height: 49px;
    overflow-x: visible;
    overflow-y: clip;
    line-height: 12px;
    white-space: normal;
  }

  .big-icon {
    display: flex;
    align-items: center;
    flex: 0 0 28px;
  }

  .small {
    justify-content: flex-start;
    gap: 3px;
    height: 17px;
    min-width: 0;
  }

  .small i {
    margin-left: 3px;
  }

  .draw {
    grid-template-columns: 31px 34px 46px 25px 1fr;
  }

  .draw .stack {
    padding-left: 5px;
  }

  .draw .small {
    gap: 0;
  }

  .modify {
    grid-template-columns: 56px 53px 57px 1fr;
    grid-auto-rows: 17px;
    padding-left: 3px;
  }

  .annotation {
    grid-template-columns: 35px 55px 1fr;
  }

  .layers {
    grid-template-columns: 54px 1fr;
  }

  .layer-grid {
    display: grid;
    grid-template-columns: 16px 16px 16px 16px 1fr;
    grid-auto-rows: 17px;
  }

  .combo {
    display: flex;
    align-items: center;
    gap: 3px;
    height: 15px;
    padding: 0 3px;
    background: #485364;
  }

  .layer-combo {
    width: 131px;
    height: 13px;
    margin: 2px 0;
  }

  .swatch {
    width: 10px;
    height: 10px;
    background: #f4f6f7;
  }

  .rule {
    width: 42px;
    height: 1px;
    background: #aab2ba;
  }

  .block {
    grid-template-columns: 31px 1fr;
  }

  .properties {
    grid-template-columns: 53px 1fr;
  }

  .prop {
    display: flex;
    align-items: center;
    gap: 3px;
    height: 17px;
  }

  .prop .combo {
    flex: 1;
    min-width: 0;
  }

  .pair {
    grid-template-columns: 1fr 18px;
  }

  .pair .small {
    gap: 0;
  }

  .pair:has(.small i) {
    grid-template-columns: 1fr 24px;
  }

  .selected {
    width: 14px;
    padding-left: 1px;
    background: #39617f;
    box-shadow: 0 0 0 1px #5f9ac4;
  }

  .selected .small {
    height: 15px;
  }

  .view {
    grid-template-columns: 48px;
  }

  .files,
  .layouts {
    display: flex;
    align-items: center;
    background: #20262e;
  }

  .files {
    height: 20px;
    border-bottom: 2px solid #353d46;
  }

  .burger {
    width: 32px;
  }

  .file {
    height: 20px;
    padding: 0 7px;
  }

  .file.open,
  .layout.open {
    background: #39424c;
    clip-path: polygon(6px 0, 100% 0, calc(100% - 6px) 100%, 0 100%);
    font-weight: 700;
    color: #eef1f3;
  }

  .file.open {
    gap: 5px;
    padding: 0 8px;
  }

  .add {
    width: 28px;
  }

  .slash {
    width: 1px;
    height: 10px;
    background: #3b434c;
    transform: skewX(-20deg);
  }

  .canvas {
    position: relative;
    flex: 1;
    min-height: 400px;
    overflow: hidden;
    background: #212830;
  }

  .drawing {
    position: absolute;
    width: 100%;
    height: 100%;
  }

  .thin path {
    fill: none;
    stroke: #8d9399;
  }

  .preview {
    stroke: #b8bdc1;
    stroke-width: 2;
  }

  .values text {
    fill: #eef1f4;
    font: 25px "Liberation Sans", sans-serif;
    text-anchor: middle;
  }

  .values .bold {
    font-weight: 700;
  }

  .ucs path {
    fill: none;
    stroke: #8d9399;
  }

  .ucs text {
    fill: #a2a8ad;
    font: 15px "Open Sans", sans-serif;
  }

  .viewport {
    position: absolute;
    top: 2px;
    left: 2px;
    font-size: 8px;
  }

  .viewport-window {
    position: absolute;
    top: 6px;
    right: 7px;
    gap: 5px;
  }

  .cube {
    position: absolute;
    top: 24px;
    right: 10px;
    display: flex;
    flex-direction: column;
    align-items: center;
    gap: 13px;
  }

  .compass text {
    fill: #b2b7bb;
    font: 700 12px "Liberation Sans", sans-serif;
    text-anchor: middle;
  }

  .face {
    fill: #4b5054;
    font: 700 8px "Liberation Sans", sans-serif;
    text-anchor: middle;
  }

  .wcs {
    width: 32px;
    height: 12px;
    padding-right: 8px;
    border-radius: 3px;
    background: #989da2;
    color: #5f656b;
    font-size: 8px;
  }

  .navbar {
    position: absolute;
    top: 157px;
    right: 3px;
    display: flex;
    flex-direction: column;
    align-items: center;
    justify-content: center;
    gap: 12px;
    width: 21px;
    height: 142px;
    border-radius: 2px;
    background: #5b636a;
  }

  .navbar svg {
    opacity: 0.15;
  }

  .dynamic {
    position: absolute;
    top: 76px;
    right: 0;
    display: flex;
    gap: 5px;
    color: #25282a;
    font-size: 8px;
    line-height: 12px;
  }

  .dynamic label {
    display: flex;
    align-items: center;
    justify-content: space-between;
    width: 154px;
    height: 12px;
    padding-left: 2px;
    border: 1px solid #a5a8aa;
    background: #8b8e90;
    white-space: nowrap;
  }

  .dynamic b {
    width: 4px;
    height: 4px;
    margin-right: 2px;
    border: 1px solid #eee;
  }

  .dynamic input {
    width: 22px;
    height: 12px;
    border: 1px solid #fff;
    background: #2384dc;
    color: #c6e2fa;
  }

  .dynamic span {
    width: 20px;
    padding-left: 3px;
    background: #85898b;
    line-height: 14px;
  }

  .console {
    position: absolute;
    right: 259px;
    bottom: 1px;
    left: 259px;
    font: 8px/11px "DejaVu Sans Mono", monospace;
  }

  .history {
    display: flex;
    flex-direction: column;
    align-items: flex-start;
    gap: 2px;
    padding: 0 0 1px 43px;
  }

  .history span {
    background: #545a5f;
    color: #b5babd;
    white-space: pre;
  }

  .prompt {
    display: flex;
    height: 17px;
  }

  .tools {
    display: flex;
    align-items: center;
    gap: 6px;
    width: 36px;
    padding-left: 3px;
    background: #2a3038;
  }

  .grip {
    width: 4px;
    height: 11px;
    background: repeating-linear-gradient(#8b9299 0 1px, #41484f 1px 2px);
  }

  .entry {
    display: flex;
    flex: 1;
    align-items: center;
    gap: 3px;
    padding-right: 2px;
    background: #fff;
    color: #30343a;
  }

  .entry input {
    flex: 1;
    min-width: 0;
  }

  .mark {
    width: 9px;
    height: 8px;
    margin-left: 2px;
    background: #fbfbf2;
  }

  mark {
    background: #cfd1d8;
    color: #34329b;
  }

  .layouts {
    height: 22px;
    border-top: 1px solid #3b424a;
    background: #252b35;
  }

  .layout {
    height: 22px;
    padding: 0 8px;
  }

  .status {
    display: flex;
    margin-left: auto;
    background: #2d3541;
  }

  .status button {
    width: 17px;
    height: 16px;
  }

  .status .drop {
    width: 10px;
  }

  .status .on {
    background: #4b83b9;
  }

  .status small {
    font-size: 8px;
  }

  .taskbar {
    display: grid;
    grid-template-columns: 1fr auto 1fr;
    align-items: center;
    height: 30px;
    background: #132a2d;
  }

  .weather {
    gap: 3px;
    justify-self: start;
    padding-left: 13px;
    font-size: 8px;
    line-height: 11px;
    text-align: left;
  }

  .moon {
    position: relative;
    padding-top: 4px;
  }

  .moon b {
    position: absolute;
    top: -2px;
    right: -1px;
    width: 11px;
    border-radius: 6px;
    background: #ee9da4;
    color: #592026;
    text-align: center;
  }

  .apps,
  .tray,
  .net {
    display: flex;
    align-items: center;
  }

  .start {
    width: 26px;
    margin-right: 4px;
  }

  .find {
    display: flex;
    align-items: center;
    gap: 5px;
    width: 132px;
    height: 22px;
    padding: 0 7px;
    border-radius: 11px;
    background: #2b4043;
    font-size: 12px;
  }

  .find input {
    flex: 1;
    min-width: 0;
  }

  .find input::placeholder {
    color: #b5c0c2;
  }

  .task {
    position: relative;
    width: 29px;
    height: 28px;
  }

  .focused {
    border-radius: 3px;
    background: #273b3f;
  }

  .running::after {
    content: "";
    position: absolute;
    bottom: 1px;
    left: 13px;
    width: 4px;
    height: 2px;
    background: #99a7a8;
  }

  .focused::after {
    left: 10px;
    width: 10px;
    background: #69cdc6;
  }

  .cad {
    width: 15px;
    height: 16px;
    border-radius: 2px;
    background: #c51f50;
    color: #fff;
  }

  .tray {
    gap: 11px;
    justify-self: end;
    padding-right: 13px;
    font-size: 8px;
    line-height: 11px;
  }

  .net {
    gap: 5px;
  }

  .clock {
    text-align: right;
  }
</style>
